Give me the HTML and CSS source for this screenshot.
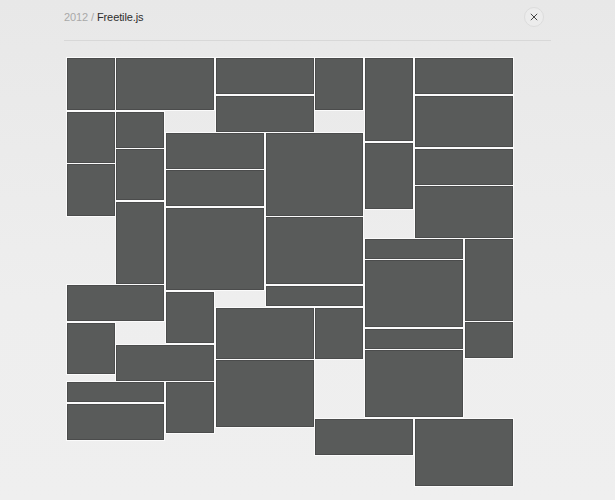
FILE: index.html
```html
<!DOCTYPE html>
<html lang="en">
<head>
    <meta charset="UTF-8">
    <title>2012 / Freetile.js</title>
    <link rel="stylesheet" href="styles.css">
</head>
<body>
    <div class="page">
        <div class="topbar">
            <h1 class="title"><span class="year">2012 /</span> Freetile.js</h1>
            <a class="close" href="#" title="Close">
                <svg width="10" height="10" viewBox="0 0 10 10">
                    <path d="M1.8 1.8 L8.2 8.2 M8.2 1.8 L1.8 8.2" stroke="#444" stroke-width="1" fill="none"/>
                </svg>
            </a>
        </div>

        <!-- tiles are placed by the script below -->
        <div id="board" class="board"></div>
    </div>

    <script>
        // [column, span, top, height] - columns are 49.75px wide
        var S = 36, M = 51.7, L = 66.7, XL = 82.3, XS = 20;
        var tiles = [
            [0, 1, 0, M], [1, 2, 0, M], [3, 2, 0, S], [3, 2, 37.4, S],
            [5, 1, 0, M], [6, 1, 0, XL], [7, 2, 0, S], [7, 2, 37.4, M],
            [7, 2, 90.4, S], [7, 2, 127.7, M],
            [0, 1, 53.4, M], [0, 1, 106, M],
            [1, 1, 53.4, S], [1, 1, 90.4, M], [1, 1, 143.4, XL],
            [2, 2, 75, S], [2, 2, 112, S], [2, 2, 149.4, XL],
            [4, 2, 75, XL], [4, 2, 158.7, L], [4, 2, 227.4, XS],
            [6, 1, 84.4, L],
            [6, 2, 180.4, XS], [6, 2, 202, L], [6, 2, 270.4, XS], [6, 2, 292, L],
            [8, 1, 180.4, XL], [8, 1, 264, S],
            [0, 2, 227, S], [0, 1, 264.4, M], [1, 2, 286.7, S],
            [0, 2, 323.4, XS], [0, 2, 345.4, S],
            [2, 1, 233.4, M], [2, 1, 323.4, M],
            [3, 2, 249.4, M], [3, 2, 301.7, L],
            [5, 1, 249.4, M], [5, 2, 361, S], [7, 2, 361, L]
        ];

        var board = document.getElementById('board');
        tiles.forEach(function (t) {
            var el = document.createElement('div');
            el.className = 'tile';
            el.style.left = (2.6 + t[0] * 49.75) + 'px';
            el.style.top = (t[2] + 0.4) + 'px';
            el.style.width = (t[1] * 49.75 - 1.6) + 'px';
            el.style.height = t[3] + 'px';
            board.appendChild(el);
        });
    </script>
</body>
</html>
```

FILE: styles.css
```css
* {
    box-sizing: border-box;
    margin: 0;
    padding: 0;
}

body {
    font-family: 'Liberation Sans', Arial, sans-serif;
    background: linear-gradient(180deg, #e8e8e8 0%, #eeeeee 60%, #efefef 100%);
    min-height: 100vh;
    color: #333;
}

.page {
    width: 487px;
    margin-left: 64px;
}

.topbar {
    display: flex;
    justify-content: space-between;
    align-items: center;
    height: 41px;
    padding-bottom: 6px;
    border-bottom: 1px solid #d8d8d8;
}

.title {
    font-size: 11px;
    font-weight: normal;
    color: #2e2e2e;
    letter-spacing: -0.1px;
}

.title .year {
    color: #a8a8a8;
}

.close {
    display: flex;
    align-items: center;
    justify-content: center;
    width: 20px;
    height: 20px;
    margin-right: 7px;
    border: 1px solid #dcdcdc;
    border-radius: 50%;
    background: #ececec;
}

/* free layout board */
.board {
    position: relative;
    height: 430px;
    margin-top: 17px;
}

.tile {
    position: absolute;
    background: #595b5a;
    border: 1px solid #4b4c4c;
    box-shadow: 0 0 0 1px #fbfbfb;
}
```
